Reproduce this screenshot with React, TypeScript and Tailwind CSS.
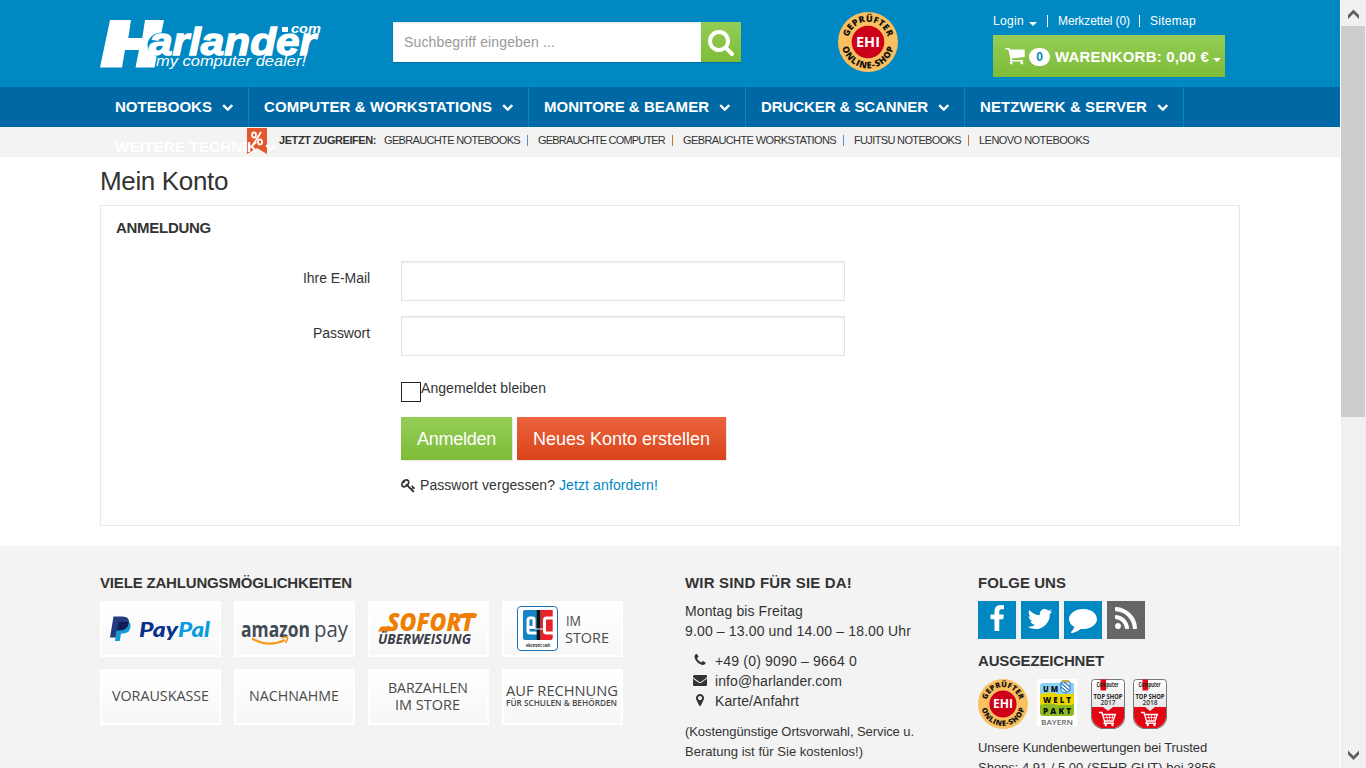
import React from 'react';

const ICONS = {
  search: 'M1216 832q0-185-131.5-316.5t-316.5-131.5-316.5 131.5-131.5 316.5 131.5 316.5 316.5 131.5 316.5-131.5 131.5-316.5zm512 832q0 52-38 90t-90 38q-54 0-90-38l-343-342q-179 124-399 124-143 0-273.5-55.5t-225-150-150-225-55.5-273.5 55.5-273.5 150-225 225-150 273.5-55.5 273.5 55.5 225 150 150 225 55.5 273.5q0 220-124 399l343 343q37 37 37 90z',
  cart: 'M704 1536q0 52-38 90t-90 38-90-38-38-90 38-90 90-38 90 38 38 90zm896 0q0 52-38 90t-90 38-90-38-38-90 38-90 90-38 90 38 38 90zm128-1088v512q0 24-16.5 42.5t-40.5 21.5l-1044 122q13 60 13 70 0 16-24 64h920q26 0 45 19t19 45-19 45-45 19h-1024q-26 0-45-19t-19-45q0-11 8-31.5t16-36 21.5-40 15.5-29.5l-177-823h-204q-26 0-45-19t-19-45 19-45 45-19h256q16 0 28.5 6.5t19.5 15.5 13 24.5 8 26 5.5 29.5 4.5 26h1201q26 0 45 19t19 45z',
  chevron: 'M1683 808l-742 741q-19 19-45 19t-45-19l-742-741q-19-19-19-45.5t19-45.5l166-165q19-19 45-19t45 19l531 531 531-531q19-19 45-19t45 19l166 165q19 19 19 45.5t-19 45.5z',
  facebook: 'M1343 12v264h-157q-86 0-116 36t-30 108v189h293l-39 296h-254v759h-306v-759h-255v-296h255v-218q0-186 104-288.5t277-102.5q147 0 228 12z',
  twitter: 'M1684 408q-67 98-162 167 1 14 1 42 0 130-38 259.5t-115.5 248.5-184.5 210.5-258 146-323 54.5q-271 0-496-145 35 4 78 4 225 0 401-138-105-2-188-64.5t-114-159.5q33 5 61 5 43 0 85-11-112-23-185.5-111.5t-73.5-205.5v-4q68 38 146 41-66-44-105-115t-39-154q0-88 44-163 121 149 294.5 238.5t371.5 99.5q-8-38-8-74 0-134 94.5-228.5t228.5-94.5q140 0 236 102 109-21 205-78-37 115-142 178 93-10 186-50z',
  comment: 'M1792 896q0 174-120 321.5t-326 233-450 85.5q-70 0-145-8-198 175-460 242-49 14-114 22-17 2-30.5-9t-17.5-29v-1q-3-4-.5-12t2-10 4.5-9.5l6-9 7-8.5 8-9q7-8 31-34.5t34.5-38 31-39.5 32.5-51 27-59 26-76q-157-89-247.5-220t-90.5-281q0-130 71-248.5t191-204.5 286-136.5 348-50.5q244 0 450 85.5t326 233 120 321.5z',
  rss: 'M576 1344q0 80-56 136t-136 56-136-56-56-136 56-136 136-56 136 56 56 136zm512 123q2 28-17 48-18 21-47 21h-135q-25 0-43-16.5t-20-41.5q-22-229-184.5-391.5t-391.5-184.5q-25-2-41.5-20t-16.5-43v-135q0-29 21-47 17-17 43-17h5q160 13 306 80.5t259 181.5q114 113 181.5 259t80.5 306zm512 2q2 27-18 47-18 20-46 20h-143q-26 0-44.5-17.5t-19.5-42.5q-12-215-101-408.5t-231.5-336-336-231.5-408.5-102q-25-1-42.5-19.5t-17.5-43.5v-143q0-28 20-46 18-18 44-18h3q262 13 501.5 120t425.5 294q187 186 294 425.5t120 501.5z',
  phone: 'M1600 1240q0 27-10 70.5t-21 68.5q-21 50-122 106-94 51-186 51-27 0-53-3.5t-57.5-12.5-47-14.5-55.5-20.5-49-18q-98-35-175-83-127-79-264-216t-216-264q-48-77-83-175-3-9-18-49t-20.5-55.5-14.5-47-12.5-57.5-3.5-53q0-92 51-186 56-101 106-122 25-11 68.5-21t70.5-10q14 0 21 3 18 6 53 76 11 19 30 54t35 63.5 31 53.5q3 4 17.5 25t21.5 35.5 7 28.5q0 20-28.5 50t-62 55-62 53-28.5 46q0 9 5 22.5t8.5 20.5 14 24 11.5 19q76 137 174 235t235 174q2 1 19 11.5t24 14 20.5 8.5 22.5 5q18 0 46-28.5t53-62 55-62 50-28.5q14 0 28.5 7t35.5 21.5 25 17.5q25 15 53.5 31t63.5 35 54 30q70 35 76 53 3 7 3 21z',
  envelope: 'M1792 710v794q0 66-47 113t-113 47h-1472q-66 0-113-47t-47-113v-794q44 49 101 87 362 246 497 345 57 42 92.5 65.5t94.5 48 110 24.5h2q51 0 110-24.5t94.5-48 92.5-65.5q170-123 498-345 57-39 100-87zm0-294q0 79-49 151t-122 123q-376 261-468 325-10 7-42.5 31t-54 38-52 31.5-57.5 27-50 9h-2q-23 0-50-9t-57.5-27-52-31.5-54-38-42.5-31q-91-64-262-182.5t-205-142.5q-62-42-117-115.5t-55-136.5q0-78 41.5-130t118.5-52h1472q65 0 112.5 47t47.5 113z',
  marker: 'M1152 640q0-106-75-181t-181-75-181 75-75 181 75 181 181 75 181-75 75-181zm256 0q0 109-33 179l-364 774q-16 33-47.5 52t-67.5 19-67.5-19-46.5-52l-365-774q-33-70-33-179 0-212 150-362t362-150 362 150 150 362z',
  key: 'M832 512q0-80-56-136t-136-56-136 56-56 136q0 42 19 83-41-19-83-19-80 0-136 56t-56 136 56 136 136 56 136-56 56-136q0-42-19-83 41 19 83 19 80 0 136-56t56-136zm851 704q0 17-49 66t-66 49q-9 0-28.5-16t-36.5-33-38.5-40-24.5-26l-96 96 220 220q28 28 28 68 0 42-39 81t-81 39q-40 0-68-28l-671-671q-176 131-365 131-163 0-265.5-102.5t-102.5-265.5q0-160 95-313t248-248 313-95q163 0 265.5 102.5t102.5 265.5q0 189-131 365l355 355 96-96q-3-3-26-24.5t-40-38.5-33-36.5-16-28.5q0-17 49-66t66-49q13 0 23 10 6 6 46 44.5t82 79.5 86.5 86 73 78 28.5 41z',
};

function Icon({ name, className }: { name: keyof typeof ICONS; className?: string }) {
  return (
    <svg viewBox="0 0 1792 1792" fill="currentColor" className={`shrink-0 ${className ?? ''}`}>
      <path d={ICONS[name]} />
    </svg>
  );
}

/* Text inside a drawing, stretched to an exact width. */
function T({ x, y, w, s, f = 'Liberation Sans', b, i, fill = '#fff', children }: {
  x: number; y: number; w: number; s: number; f?: string; b?: number; i?: boolean; fill?: string; children: string;
}) {
  return (
    <text x={x} y={y} textLength={w} lengthAdjust="spacingAndGlyphs" fontSize={s} fontFamily={`"${f}", sans-serif`}
      fontWeight={b ?? 400} fontStyle={i ? 'italic' : 'normal'} fill={fill}>
      {children}
    </text>
  );
}

function Logo() {
  return (
    <svg width="222" height="54" viewBox="0 0 222 54" className="shrink-0">
      <path d="M10 1H31L28.300 19H42.300L45 1H64L54.500 48.500H35.500L39 31H25L22 48.500H0Z" fill="#fff" />
      <ellipse cx="62" cy="26" rx="14.500" ry="12.500" fill="#0088c3" />
      <text x="49" y="36" textLength="167" lengthAdjust="spacingAndGlyphs" fontSize="38.500" fontWeight="700"
        fontStyle="italic" fontFamily='"Liberation Sans", sans-serif' fill="#fff" stroke="#fff" strokeWidth="1.300">arlander</text>
      <path d="M180 6h9.500v8.500H180z" fill="#0088c3" />
      <rect x="182" y="8" width="6" height="5" fill="#fff" />
      <T x={191} y={13.500} w={30} s={12} b={700} i>com</T>
      <T x={56} y={47} w={150} s={14.500} i>my computer dealer!</T>
    </svg>
  );
}

function Ehi({ id, className }: { id: string; className: string }) {
  return (
    <svg viewBox="0 0 60 60" className={`shrink-0 ${className}`}>
      <defs>
        <path id={`${id}t`} d="M9.8 30A20.2 20.2 0 0 1 50.2 30" />
        <path id={`${id}b`} d="M3.7 30A26.3 26.3 0 0 0 56.3 30" />
      </defs>
      <circle cx="30" cy="30" r="30" fill="#fabf5e" />
      <circle cx="30" cy="30" r="16.3" fill="#cc0019" />
      <g fontFamily='"Open Sans", sans-serif' fontWeight="800" fontSize="9" fill="#111" textAnchor="middle">
        <text><textPath href={`#${id}t`} startOffset="50%" textLength="53">GEPRÜFTER</textPath></text>
        <text><textPath href={`#${id}b`} startOffset="50%" textLength="71">ONLINE-SHOP</textPath></text>
      </g>
      <T x={18} y={35.3} w={24} s={14.5} f="Open Sans" b={700}>EHI</T>
    </svg>
  );
}

function Umwelt() {
  return (
    <svg width="40" height="47" viewBox="0 0 40 47">
      <rect width="40" height="47" fill="#fff" />
      <path d="M3 7q0-3 3-3h31v11H3z" fill="#8bd0f5" />
      <path d="M3 15h34v11H3z" fill="#ecd500" />
      <path d="M3 26h34v8q0 3-3 3H6q-3 0-3-3z" fill="#8dbb22" />
      <path d="M3 15q10-3 18 0t16-1v3H3z" fill="#ecd500" />
      <path d="M3 26q10-3 18 0t16-1v3H3z" fill="#8dbb22" />
      <path d="M24 3h9v8q-1 2-4.500 3-3.500-1-4.500-3z" fill="#fff" stroke="#2779bd" />
      <path d="M24 4l9 8M27 3l6 5M24 8l6 5" stroke="#2779bd" strokeWidth="1.200" />
      <path d="M25 1h7v2h-7z" fill="#c9ab4b" />
      <T x={6} y={12.500} w={15} s={8} f="Open Sans" b={800} fill="#111">U M</T>
      <T x={6} y={23.500} w={28} s={8} f="Open Sans" b={800} fill="#111">W E L T</T>
      <T x={6} y={34.500} w={28} s={8} f="Open Sans" b={800} fill="#111">P A K T</T>
      <T x={4} y={45.500} w={32} s={7} f="Open Sans" b={600} fill="#666">BAYERN</T>
    </svg>
  );
}

function TopShop({ year }: { year: string }) {
  return (
    <svg width="34" height="50" viewBox="0 0 34 50">
      <defs>
        <linearGradient id={`g${year}`} x1="0" y1="0" x2="0" y2="1">
          <stop offset="0" stopColor="#fff" /><stop offset="1" stopColor="#d5d5d5" />
        </linearGradient>
      </defs>
      <path d="M.5 3.500Q.5.500 3.500.500h27q3 0 3 3V39Q33 47 24 49.500H10Q1 47 .5 39Z" fill={`url(#g${year})`} stroke="#777" />
      <path d="M1 28H12l5 4 5-4H33V39Q32 46 24 49H10Q2 46 1 39Z" fill="#e30613" />
      <rect x="9.500" y="0.500" width="5.500" height="11" fill="#e30613" />
      <T x={5.5} y={8.2} w={22} s={6.500} f="Open Sans" b={700} fill="#222">Computer</T>
      <T x={2.500} y={19.500} w={29} s={7.2} f="Open Sans" b={700} fill="#222">TOP SHOP</T>
      <T x={9.500} y={25.500} w={15} s={6.5} f="Open Sans" b={600} fill="#333">{year}</T>
      <path d="M8 33.500h3l2.500 8.500h8.500l2.300-6.500H12.500M14 42l-.8 2.300H23" fill="none" stroke="#fff" strokeWidth="1.400" />
      <path d="M15.500 36l1 5.500M18.500 36v5.500M21.700 36l-.8 5.500M13.500 38.500h10" stroke="#fff" strokeWidth=".7" />
      <circle cx="14.800" cy="46" r="1.200" fill="#fff" /><circle cx="21.500" cy="46" r="1.200" fill="#fff" />
    </svg>
  );
}

const NAV: [string, string, number][] = [
  ['NOTEBOOKS', 'w-[149px]', 97],
  ['COMPUTER & WORKSTATIONS', 'w-[280px]', 228],
  ['MONITORE & BEAMER', 'w-[217px]', 165],
  ['DRUCKER & SCANNER', 'w-[219px]', 167],
  ['NETZWERK & SERVER', 'w-[219px]', 167],
];

function PayCard({ children }: { children: React.ReactNode }) {
  return (
    <div className="h-[56px] w-[121px] border-2 border-white bg-gradient-to-b from-white to-[#f7f7f7]">
      <svg width="117" height="52" viewBox="2 2 117 52">{children}</svg>
    </div>
  );
}

const OS = 'Open Sans';
const G = '#4a4a4a';

function Payments() {
  return (
    <div className="mt-[8px] grid grid-cols-[repeat(4,121px)] gap-x-[13px] gap-y-[12px]">
      <PayCard>
        <path d="M13.500 15.500h9q7 0 6.500 6-1 8-9 8h-3l-1 7H10z" fill="#253b80" />
        <path d="M29 21q2 1.500 1.500 5-1 6.500-7.500 6.500h-2l-1.200 7.500H15l1.200-8 1-3.500h3q8 0 8.800-7.500z" fill="#179bd7" />
        <path d="M18.500 22q.2-1.300 1.500-1.300h6q2 0 3 .6-1 8.200-9 8.200h-3z" fill="#101d58" />
        <T x={39} y={36} w={39} s={21} f="Lato" b={900} i fill="#073088">Pay</T>
        <T x={78} y={36} w={32} s={21} f="Lato" b={900} i fill="#0a9be0">Pal</T>
      </PayCard>
      <PayCard>
        <T x={7} y={35.500} w={69} s={21} f={OS} b={700} fill="#414a54">amazon</T>
        <T x={80} y={35.500} w={34} s={21} f={OS} fill="#414a54">pay</T>
        <path d="M18 37.500q16 9.500 33 1.500" fill="none" stroke="#f7981d" strokeWidth="2.200" />
        <path d="M47.500 37q6.500-2 6 .5-.5 2.500-2 4.500" fill="none" stroke="#f7981d" strokeWidth="1.500" />
      </PayCard>
      <PayCard>
        <path d="M13 25.500h10l-2 5H10z" fill="#ee7f00" />
        <T x={19} y={30.200} w={87} s={24} f={OS} b={800} i fill="#ee7f00">SOFORT</T>
        <path d="M92 12.700h17.500l-2 4.300H92z" fill="#ee7f00" />
        <T x={10} y={43} w={93} s={13.500} f={OS} b={700} i fill="#3c3e49">ÜBERWEISUNG</T>
      </PayCard>
      <PayCard>
        <rect x="15.500" y="5.500" width="40" height="44" rx="3.500" fill="#fff" stroke="#1a72b8" />
        <path d="M23 9h12v30H23q-2 0-2-2V11q0-2 2-2z" fill="#1583c5" />
        <path d="M34.700 9h4v30h-4z" fill="#111" />
        <path d="M38.700 9h12v28q0 2-2 2h-10z" fill="#e8202a" />
        <path d="M26.500 26.500H32V18.500Q32 17 30.500 17H28q-2 0-2 2v11q0 2 2 2h6.500" fill="none" stroke="#fff" strokeWidth="3" />
        <path d="M51 17h-6.500q-2 0-2 2v11q0 2 2 2H51" fill="none" stroke="#fff" strokeWidth="3" />
        <path d="M33 28h9" stroke="#fff" />
        <T x={24} y={45.500} w={24} s={5.500} f={OS} b={700} fill="#222">electronic cash</T>
        <T x={64} y={25} w={15} s={14} f={OS} fill={G}>IM</T>
        <T x={63} y={42} w={44} s={14} f={OS} fill={G}>STORE</T>
      </PayCard>
      <PayCard><T x={12} y={32} w={97} s={14} f={OS} fill={G}>VORAUSKASSE</T></PayCard>
      <PayCard><T x={15} y={32} w={90} s={14} f={OS} fill={G}>NACHNAHME</T></PayCard>
      <PayCard>
        <T x={20} y={24} w={80} s={14} f={OS} fill={G}>BARZAHLEN</T>
        <T x={27} y={41} w={65} s={14} f={OS} fill={G}>IM STORE</T>
      </PayCard>
      <PayCard>
        <T x={4} y={27} w={112} s={14} f={OS} fill={G}>AUF RECHNUNG</T>
        <T x={4} y={37} w={111} s={8.500} f={OS} b={600} fill={G}>FÜR SCHULEN &amp; BEHÖRDEN</T>
      </PayCard>
    </div>
  );
}

/* Text whose tracking is adjusted so that it fills the given width. */
function Fit({ w, children }: { w: number; children: string }) {
  const ref = React.useRef<HTMLSpanElement>(null);
  const [ls, setLs] = React.useState(0);
  React.useLayoutEffect(() => {
    const el = ref.current;
    if (el) setLs((w - el.getBoundingClientRect().width) / children.length);
  }, []);
  return <span ref={ref} className="inline-block whitespace-nowrap" style={{ letterSpacing: ls }}>{children}</span>;
}

const CAR = 'inline-block border-x-4 border-t-4 border-x-transparent border-t-white';
const FIELD = 'h-[40px] border border-[#e3e3e3] shadow-[inset_0_1px_2px_rgba(0,0,0,0.08)]';

function Sep({ className }: { className: string }) {
  return <i className={`mt-[8px] mr-[10px] ml-[7px] h-[11px] w-px ${className}`} />;
}

export default function App() {
  return (
    <div className="flex h-[768px] w-[1366px] overflow-hidden bg-white font-['Liberation_Sans',sans-serif] text-sm leading-5 text-[#333]">
      <div className="h-[768px] w-[1340px] overflow-hidden">
        <header className="flex h-[87px] bg-[#0088c3] pl-[100px] text-white">
          <div className="w-[293px] pt-[19px]"><Logo /></div>
          <div className="mt-[22px] flex h-[40px] w-[348px] shadow-[0_1px_1px_rgba(0,0,0,0.15)]">
            <div className="flex w-[308px] items-center bg-white pl-[11px] text-[#999] shadow-[inset_0_1px_2px_rgba(0,0,0,0.12)]">
              <Fit w={151}>Suchbegriff eingeben ...</Fit>
            </div>
            <div className="flex w-[40px] items-center justify-center bg-gradient-to-b from-[#94cd56] to-[#7ebc38]">
              <Icon name="search" className="h-[28px] w-[28px]" />
            </div>
          </div>
          <div className="ml-[97px] pt-[12px]"><Ehi id="top" className="h-[60px] w-[60px]" /></div>
          <div className="ml-[95px] w-[232px] pt-[13px]">
            <div className="flex h-[15px] items-center text-xs">
              <Fit w={31}>Login</Fit>
              <span className={`mt-[6px] ml-[5px] ${CAR}`} />
              <span className="mr-[10px] ml-[10px] h-[12px] w-px bg-white" />
              <Fit w={72}>Merkzettel (0)</Fit>
              <span className="mr-[10px] ml-[9px] h-[12px] w-px bg-white" />
              <Fit w={46}>Sitemap</Fit>
            </div>
            <div className="mt-[7px] flex h-[42px] items-center bg-gradient-to-b from-[#94cd56] to-[#7ebc38] pl-[11px] text-[15px] font-bold">
              <Icon name="cart" className="mb-[2px] h-[21px] w-[22px]" />
              <span className="ml-[3px] mt-[2px] flex h-[18px] w-[21px] items-center justify-center rounded-full bg-white text-xs text-[#0088c3]">0</span>
              <span className="ml-[5px] mt-[2px]"><Fit w={154}>WARENKORB: 0,00 €</Fit></span>
              <span className={`mt-[7px] ml-[4px] ${CAR}`} />
            </div>
          </div>
        </header>
        <nav className="relative z-10 flex h-[40px] bg-[#0069a5] pl-[100px] text-[15px] font-bold text-white">
          {NAV.map(([label, w, tw]) => (
            <div key={label} className={`flex items-center border-r border-[#0088c3] pl-[15px] ${w}`}>
              <Fit w={tw}>{label}</Fit>
              <Icon name="chevron" className="ml-[9.5px] h-[11.5px] w-[11.5px]" />
            </div>
          ))}
          <div className="absolute top-[40px] left-[115px] flex h-[40px] items-center">
            <Fit w={143}>WEITERE TECHNIK</Fit>
            <Icon name="chevron" className="ml-[6.5px] h-[11.5px] w-[11.5px]" />
          </div>
        </nav>
        <div className="flex h-[30px] bg-[#f3f3f3] pl-[247px] text-[11px] leading-[26px]">
          <svg width="20" height="27" viewBox="0 0 20 27" className="mt-px">
            <path d="M0 0H20V26L10 20 0 26Z" fill="#e4562d" />
            <path d="M14 4L6 17" stroke="#fff" strokeWidth="1.800" />
            <ellipse cx="7" cy="7" rx="2" ry="2.700" fill="none" stroke="#fff" strokeWidth="1.800" />
            <ellipse cx="13" cy="14" rx="2" ry="2.700" fill="none" stroke="#fff" strokeWidth="1.800" />
          </svg>
          <b className="ml-[12px] w-[105px]"><Fit w={97}>JETZT ZUGREIFEN:</Fit></b>
          <Fit w={136}>GEBRAUCHTE NOTEBOOKS</Fit><Sep className="bg-[#4f95d3]" />
          <Fit w={127}>GEBRAUCHTE COMPUTER</Fit><Sep className="bg-[#c9752f]" />
          <Fit w={153}>GEBRAUCHTE WORKSTATIONS</Fit><Sep className="bg-[#4f95d3]" />
          <Fit w={107}>FUJITSU NOTEBOOKS</Fit><Sep className="bg-[#c9752f]" />
          <Fit w={110}>LENOVO NOTEBOOKS</Fit>
        </div>
        <main className="h-[389px] px-[100px] pt-[10px]">
          <h1 className="h-[38px] text-[26px] leading-[28px]"><Fit w={128}>Mein Konto</Fit></h1>
          <section className="h-[321px] border border-[#e8e8e8] px-[15px] pt-[12px]">
            <h2 className="text-[15px] font-bold"><Fit w={95}>ANMELDUNG</Fit></h2>
            <div className="mt-[23px] grid grid-cols-[254px_444px] gap-x-[31px] gap-y-[15px]">
              <label className="pt-[7px] text-right"><Fit w={67}>Ihre E-Mail</Fit></label>
              <div className={FIELD} />
              <label className="pt-[7px] text-right"><Fit w={57}>Passwort</Fit></label>
              <div className={FIELD} />
            </div>
            <div className="pl-[285px]">
              <div className="mt-[22px] flex">
                <span className="mt-[4px] h-[20px] w-[20px] border border-[#222]" /><Fit w={125}>Angemeldet bleiben</Fit>
              </div>
              <div className="mt-[15px] flex gap-[5px] text-lg leading-[45px] text-white">
                <div className="h-[43px] w-[111px] bg-gradient-to-b from-[#94cd56] to-[#7ebc38] pl-[16px] shadow-[1px_1px_0_#e8e8e8]"><Fit w={79}>Anmelden</Fit></div>
                <div className="h-[43px] w-[209px] bg-gradient-to-b from-[#eb633d] to-[#da4317] pl-[16px] shadow-[1px_1px_0_#e8e8e8]"><Fit w={177}>Neues Konto erstellen</Fit></div>
              </div>
              <div className="mt-[15px] flex items-center">
                <Icon name="key" className="mr-[4px] h-[15px] w-[15px]" />
                <Fit w={135}>Passwort vergessen?</Fit>
                <span className="ml-[4px] text-[#0088c3]"><Fit w={99}>Jetzt anfordern!</Fit></span>
              </div>
            </div>
          </section>
        </main>
        <footer className="flex h-[222px] bg-[#f3f3f3] pt-[27px] pl-[100px]">
          <div className="w-[585px]">
            <h3 className="text-[15px] font-bold"><Fit w={252}>VIELE ZAHLUNGSMÖGLICHKEITEN</Fit></h3>
            <Payments />
          </div>
          <div className="w-[293px]">
            <h3 className="text-[15px] font-bold"><Fit w={167}>WIR SIND FÜR SIE DA!</Fit></h3>
            <p className="mt-[8px]"><Fit w={118}>Montag bis Freitag</Fit><br /><Fit w={226}>9.00 – 13.00 und 14.00 – 18.00 Uhr</Fit></p>
            <ul className="mt-[10px] [&>li]:flex [&>li]:h-[20px]">
              <li><Icon name="phone" className="mt-[2px] ml-[8px] mr-[8px] h-[14px] w-[14px]" /><Fit w={142}>+49 (0) 9090 – 9664 0</Fit></li>
              <li><Icon name="envelope" className="mt-[2px] ml-[8px] mr-[8px] h-[14px] w-[14px]" /><Fit w={127}>info@harlander.com</Fit></li>
              <li><Icon name="marker" className="mt-[2px] ml-[8px] mr-[8px] h-[14px] w-[14px]" /><Fit w={84}>Karte/Anfahrt</Fit></li>
            </ul>
            <p className="mt-[11px] text-[13px]"><Fit w={229}>(Kostengünstige Ortsvorwahl, Service u.</Fit><br /><Fit w={178}>Beratung ist für Sie kostenlos!)</Fit></p>
          </div>
          <div>
            <h3 className="text-[15px] font-bold"><Fit w={88}>FOLGE UNS</Fit></h3>
            <div className="mt-[8px] flex gap-[5px] text-white [&>span]:flex [&>span]:h-[38px] [&>span]:w-[38px] [&>span]:items-center [&>span]:justify-center">
              <span className="bg-[#0088c3]"><Icon name="facebook" className="mb-[2px] h-[28px] w-[28px]" /></span>
              <span className="bg-[#0088c3]"><Icon name="twitter" className="mb-[2px] h-[28px] w-[28px]" /></span>
              <span className="bg-[#0088c3]"><Icon name="comment" className="mb-[2px] h-[28px] w-[28px]" /></span>
              <span className="bg-[#666]"><Icon name="rss" className="mb-[2px] h-[28px] w-[28px]" /></span>
            </div>
            <h3 className="mt-[12px] text-[15px] font-bold"><Fit w={126}>AUSGEZEICHNET</Fit></h3>
            <div className="mt-[8px] flex h-[50px]">
              <Ehi id="foot" className="h-[50px] w-[50px]" />
              <div className="ml-[9px]"><Umwelt /></div>
              <div className="ml-[14px]"><TopShop year="2017" /></div>
              <div className="ml-[8px]"><TopShop year="2018" /></div>
            </div>
            <p className="mt-[9px] text-[13px]"><Fit w={229}>Unsere Kundenbewertungen bei Trusted</Fit><br /><Fit w={238}>Shops: 4.91 / 5.00 (SEHR GUT) bei 3856</Fit></p>
          </div>
        </footer>
      </div>
      <aside className="flex h-[768px] w-[26px] flex-col justify-between border-l border-white bg-[#f0f0f0]">
        <div>
          <svg width="25" height="26" viewBox="0 0 25 26"><path d="M7 19v-4l5.500-5.500L18 15v4l-5.500-5.500z" fill="#606060" /></svg>
          <div className="h-[391px] w-[24px] bg-[#cdcdcd]" />
        </div>
        <svg width="25" height="26" viewBox="0 0 25 26"><path d="M7 8.500v4L12.500 18 18 12.500v-4L12.500 14z" fill="#606060" /></svg>
      </aside>
    </div>
  );
}
